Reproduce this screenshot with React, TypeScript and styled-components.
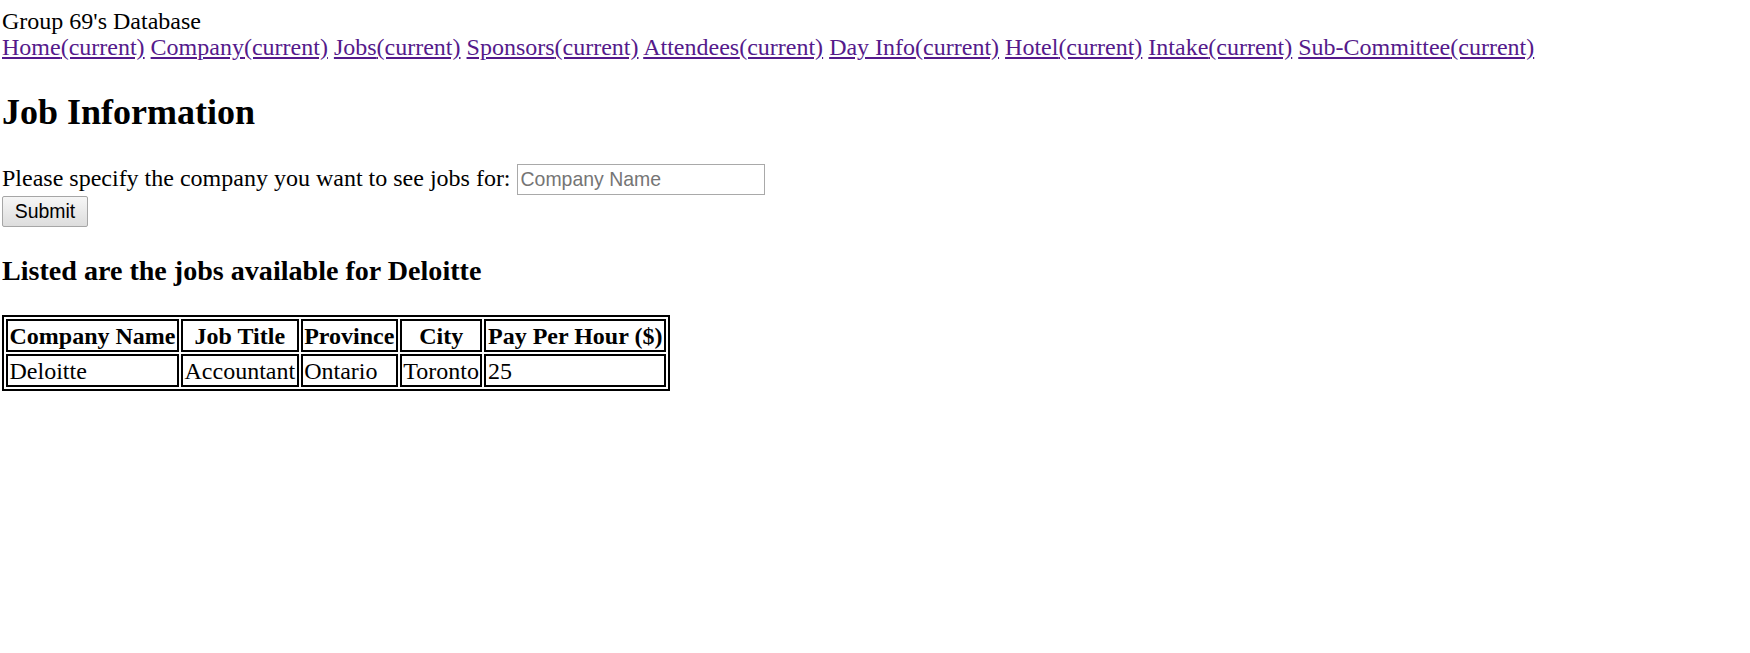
import React from "react";
import styled, { createGlobalStyle } from "styled-components";

const GlobalStyle = createGlobalStyle`
  html, body { background: #ffffff; }
  body {
    margin: 8px 0 0 2px;
    font-family: "Liberation Serif", "Times New Roman", serif;
    font-size: 24px;
    line-height: 26px;
    color: #000000;
  }
`;

const Page = styled.div`
  display: block;
`;

const Brand = styled.div`
  display: block;
`;

const Nav = styled.nav`
  display: block;
`;

const NavLink = styled.a`
  color: #551a8b;
  text-decoration: underline;
`;

const Title = styled.h2`
  font-size: 36px;
  line-height: normal;
  font-weight: bold;
  margin: 31px 0 31px 0;
`;

const Form = styled.form`
  margin: 0;
`;

const TextInput = styled.input`
  box-sizing: border-box;
  width: 248px;
  height: 31px;
  margin: 0;
  padding: 0 3px;
  border: 1px solid #a9a9a9;
  font-family: "Liberation Sans", Arial, sans-serif;
  font-size: 19.44px;
  color: #000;
  background: #fff;
  vertical-align: baseline;
  &::placeholder {
    color: #757575;
  }
`;

const SubmitButton = styled.button`
  box-sizing: border-box;
  width: 86px;
  height: 31px;
  margin: 1px 0 0 0;
  padding: 0 6px;
  border: 1px solid #a6a6a6;
  border-radius: 2px;
  background: linear-gradient(#f6f6f6, #dddddd);
  font-family: "Liberation Sans", Arial, sans-serif;
  font-size: 19.44px;
  color: #000;
`;

const Subtitle = styled.h3`
  font-size: 28.08px;
  line-height: normal;
  font-weight: bold;
  margin: 28px 0;
`;

const Table = styled.table`
  border: 2px solid #000;
  border-spacing: 2px;
  border-collapse: separate;
`;

const HeadCell = styled.th`
  border: 2px solid #000;
  padding: 1.5px 1.5px;
  font-weight: bold;
  text-align: center;
`;

const Cell = styled.td`
  border: 2px solid #000;
  padding: 1.5px 1.5px;
  text-align: left;
`;

const links = [
  "Home",
  "Company",
  "Jobs",
  "Sponsors",
  "Attendees",
  "Day Info",
  "Hotel",
  "Intake",
  "Sub-Committee",
];

const headers = ["Company Name", "Job Title", "Province", "City", "Pay Per Hour ($)"];
const rows = [["Deloitte", "Accountant", "Ontario", "Toronto", "25"]];

export default function App() {
  return (
    <Page>
      <GlobalStyle />
      <Brand>Group 69's Database</Brand>
      <Nav>
        {links.map((l, i) => (
          <React.Fragment key={l}>
            <NavLink href="#">
              {l}(current)
            </NavLink>
            {i < links.length - 1 ? " " : null}
          </React.Fragment>
        ))}
      </Nav>
      <Title>Job Information</Title>
      <Form onSubmit={(e) => e.preventDefault()}>
        Please specify the company you want to see jobs for:{" "}
        <TextInput type="text" placeholder="Company Name" />
        <br />
        <SubmitButton type="submit">Submit</SubmitButton>
      </Form>
      <Subtitle>Listed are the jobs available for Deloitte</Subtitle>
      <Table>
        <thead>
          <tr>
            {headers.map((h) => (
              <HeadCell key={h}>{h}</HeadCell>
            ))}
          </tr>
        </thead>
        <tbody>
          {rows.map((r, i) => (
            <tr key={i}>
              {r.map((c, j) => (
                <Cell key={j}>{c}</Cell>
              ))}
            </tr>
          ))}
        </tbody>
      </Table>
    </Page>
  );
}
